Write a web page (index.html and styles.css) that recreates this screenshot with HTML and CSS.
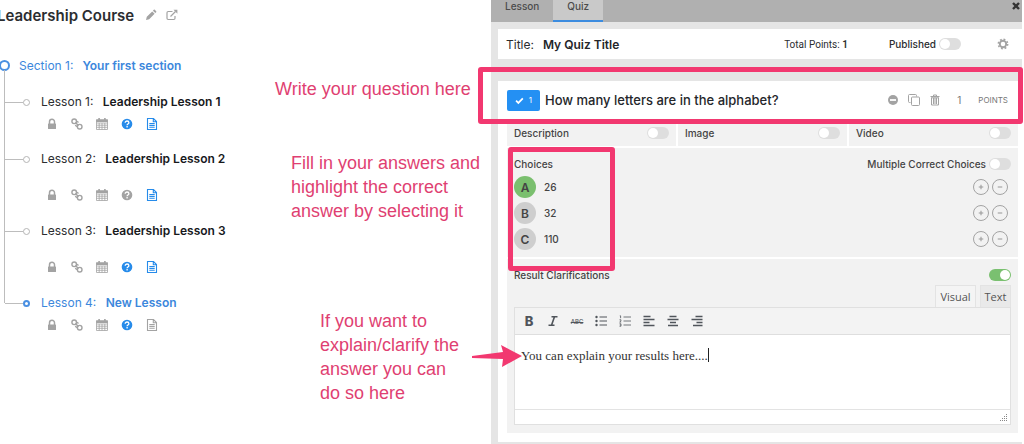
FILE: index.html
```html
<!DOCTYPE html>
<html lang="en">
<head>
<meta charset="utf-8">
<title>Leadership Course</title>
<link rel="stylesheet" href="styles.css">
</head>
<body>
<svg class="sprite" aria-hidden="true">
  <symbol id="pencil" viewBox="0 0 12 12"><path d="M1 11l.8-3.2L7.2 2.4l2.4 2.4-5.400 5.400zM7.900 1.700l.9-.9q.5-.4 1 0l1.400 1.400q.4.5 0 1l-.9.9z"/></symbol>
  <symbol id="external" viewBox="0 0 12 12"><path d="M6.500 2.500H2.200Q1 2.500 1 3.700v5.600q0 1.200 1.200 1.200h5.600Q9 10.500 9 9.300V7M4.500 7.500l5-5" fill="none" stroke="currentColor" stroke-width="1.200"/><path d="M7.500.8H11.400V4.700z"/></symbol>
  <symbol id="lock" viewBox="0 0 16 16"><path d="M5.500 8V5.800a2.500 2.500 0 0 1 5 0V8" fill="none" stroke="currentColor" stroke-width="1.500"/><rect x="4" y="7.500" width="8" height="5.500" rx=".6"/></symbol>
  <symbol id="link" viewBox="0 0 16 16"><g fill="none" stroke="currentColor" stroke-width="1.400"><circle cx="5.200" cy="5.300" r="2.300"/><circle cx="10.700" cy="10.700" r="2.300"/><path d="M6.500 6.600l2.900 2.800M8 5.200l1.500 1.300M6.300 9l1.600 1.700"/></g></symbol>
  <symbol id="calendar" viewBox="0 0 16 16"><path d="M2.500 3.800h11v9.700h-11zM2.500 7h11M2.500 9.200h11M2.500 11.300h11M5.200 7v6.500M8 7v6.500M10.800 7v6.500" fill="none" stroke="currentColor" stroke-width=".8"/><path d="M2.200 3.500h11.600V6H2.200zM4.300 2h1.600v2.500H4.300zM10.100 2h1.600v2.500h-1.600z"/></symbol>
  <symbol id="help" viewBox="0 0 16 16"><circle cx="8" cy="8" r="5.300"/><path d="M6.200 6.800c0-2.500 3.700-2.300 3.700-.1 0 1.300-1.800 1.300-1.800 2.500M8.100 10v1.400" fill="none" stroke="#fff" stroke-width="1.300"/></symbol>
  <symbol id="doc" viewBox="0 0 16 16"><path d="M3.500 2.500h6l3 3v8h-9zM9.300 2.500v3.300h3.200M5.300 7.500h5.400M5.300 9.400h5.400M5.300 11.300h5.400" fill="none" stroke="currentColor" stroke-width="1.100"/></symbol>
  <symbol id="gear" viewBox="0 0 12 12"><circle cx="6" cy="6" r="3.200" fill="none" stroke="currentColor" stroke-width="1.900"/><circle cx="6" cy="6" r="4.700" fill="none" stroke="currentColor" stroke-width="1.500" stroke-dasharray="1.850 1.840"/></symbol>
  <symbol id="check" viewBox="0 0 10 10"><path d="M1.200 5.200l2.500 2.500 5-5" fill="none" stroke="currentColor" stroke-width="1.900"/></symbol>
  <symbol id="minus" viewBox="0 0 12 12"><circle cx="6" cy="6" r="5"/><path d="M3 6h6" stroke="#fff" stroke-width="1.800"/></symbol>
  <symbol id="copy" viewBox="0 0 12 12"><g fill="none" stroke="currentColor"><path d="M2.500 8.500H1.500q-1 0-1-1v-6q0-1 1-1h6q1 0 1 1v1"/><rect x="3.500" y="3" width="8" height="8.500" rx="1"/></g></symbol>
  <symbol id="trash" viewBox="0 0 12 12"><path d="M4.500 2V1h3v1M1.500 2.500h9" fill="none" stroke="currentColor"/><path d="M2.500 4v7h7V4M4.500 4v6M6 4v6M7.500 4v6M2 3.800h8" fill="none" stroke="currentColor"/></symbol>
  <symbol id="italic" viewBox="0 0 12 12"><path d="M4.500 1.700h6M1.500 10.300h6M7.500 1.700l-3 8.600" fill="none" stroke="currentColor" stroke-width="1.600"/></symbol>
  <symbol id="bullets" viewBox="0 0 12 12"><path d="M4.500 2H12M4.500 6H12M4.500 10H12" stroke="currentColor"/><circle cx="1.500" cy="2" r="1.200"/><circle cx="1.500" cy="6" r="1.200"/><circle cx="1.500" cy="10" r="1.200"/></symbol>
  <symbol id="numbers" viewBox="0 0 12 12"><path d="M4.500 2H12M4.500 6H12M4.500 10H12M.8.8h.8v2.400M.5 4.800h1.500v1l-1.300 1.200h1.500M.5 8.800h1.500v2.400H.5M.9 10h1" fill="none" stroke="currentColor" stroke-width=".8"/></symbol>
  <symbol id="left" viewBox="0 0 12 12"><path d="M.5 1.500h7M.5 4.500h11M.5 7.500h6M.5 10.500h11" stroke="currentColor" stroke-width="1.500"/></symbol>
  <symbol id="center" viewBox="0 0 12 12"><path d="M2.500 1.500h7M.5 4.500h11M3 7.500h6M1 10.500h10" stroke="currentColor" stroke-width="1.500"/></symbol>
  <symbol id="right" viewBox="0 0 12 12"><path d="M4.500 1.500h7M.5 4.500h11M5.500 7.500h6M2 10.500h9.500" stroke="currentColor" stroke-width="1.500"/></symbol>
</svg>

<main class="page">
  <section class="outline">
    <header class="course">
      <h1>Leadership Course</h1>
      <button class="icon-btn" aria-label="Rename"><svg class="i12"><use href="#pencil"/></svg></button>
      <button class="icon-btn" aria-label="Open"><svg class="i12"><use href="#external"/></svg></button>
    </header>
    <div class="section-row"><span class="ring"></span><span>Section 1:</span><b>Your first section</b></div>
    <ul class="lessons">
      <li class="compact">
        <div class="rail"><span class="node"></span></div>
        <div class="lesson"><p>Lesson 1: <b>Leadership Lesson 1</b></p>
          <div class="tools">
            <button class="icon-btn" aria-label="Lock"><svg class="i16"><use href="#lock"/></svg></button><button class="icon-btn" aria-label="Link"><svg class="i16"><use href="#link"/></svg></button><button class="icon-btn" aria-label="Schedule"><svg class="i16"><use href="#calendar"/></svg></button><button class="icon-btn on" aria-label="Quiz"><svg class="i16"><use href="#help"/></svg></button><button class="icon-btn on" aria-label="Content"><svg class="i16"><use href="#doc"/></svg></button>
          </div></div>
      </li>
      <li>
        <div class="rail"><span class="node"></span></div>
        <div class="lesson"><p>Lesson 2: <b>Leadership Lesson 2</b></p>
          <div class="tools">
            <button class="icon-btn" aria-label="Lock"><svg class="i16"><use href="#lock"/></svg></button><button class="icon-btn" aria-label="Link"><svg class="i16"><use href="#link"/></svg></button><button class="icon-btn" aria-label="Schedule"><svg class="i16"><use href="#calendar"/></svg></button><button class="icon-btn" aria-label="Quiz"><svg class="i16"><use href="#help"/></svg></button><button class="icon-btn on" aria-label="Content"><svg class="i16"><use href="#doc"/></svg></button>
          </div></div>
      </li>
      <li>
        <div class="rail"><span class="node"></span></div>
        <div class="lesson"><p>Lesson 3: <b>Leadership Lesson 3</b></p>
          <div class="tools">
            <button class="icon-btn" aria-label="Lock"><svg class="i16"><use href="#lock"/></svg></button><button class="icon-btn" aria-label="Link"><svg class="i16"><use href="#link"/></svg></button><button class="icon-btn" aria-label="Schedule"><svg class="i16"><use href="#calendar"/></svg></button><button class="icon-btn on" aria-label="Quiz"><svg class="i16"><use href="#help"/></svg></button><button class="icon-btn on" aria-label="Content"><svg class="i16"><use href="#doc"/></svg></button>
          </div></div>
      </li>
      <li class="compact current">
        <div class="rail"><span class="node"></span></div>
        <div class="lesson"><p>Lesson 4: <b>New Lesson</b></p>
          <div class="tools">
            <button class="icon-btn" aria-label="Lock"><svg class="i16"><use href="#lock"/></svg></button><button class="icon-btn" aria-label="Link"><svg class="i16"><use href="#link"/></svg></button><button class="icon-btn" aria-label="Schedule"><svg class="i16"><use href="#calendar"/></svg></button><button class="icon-btn on" aria-label="Quiz"><svg class="i16"><use href="#help"/></svg></button><button class="icon-btn" aria-label="Content"><svg class="i16"><use href="#doc"/></svg></button>
          </div></div>
      </li>
    </ul>
  </section>

  <aside class="notes">
    <p>Write your question here</p>
    <p class="note-choices">Fill in your answers and<br>highlight the correct<br>answer by selecting it</p>
    <p class="note-result">If you want to<br>explain/clarify the<br>answer you can<br>do so here</p>
  </aside>

  <section class="panel">
    <nav class="tabs">
      <button class="tab">Lesson</button>
      <button class="tab active">Quiz</button>
      <button class="close" aria-label="Close"><svg viewBox="0 0 8 8"><path d="M1 1l6 6M7 1L1 7" stroke="currentColor" stroke-width="2.400"/></svg></button>
    </nav>

    <div class="title-card">
      <label for="quiz-title">Title:</label>
      <input id="quiz-title" class="text-input" type="text" value="My Quiz Title">
      <span class="total">Total Points: <b>1</b></span>
      <label class="published">Published <input class="switch" type="checkbox"></label>
      <button class="icon-btn" aria-label="Settings"><svg class="i12"><use href="#gear"/></svg></button>
    </div>

    <div class="quiz-card">
      <div class="question">
        <button class="badge"><svg viewBox="0 0 10 10"><use href="#check"/></svg>1</button>
        <input class="text-input" type="text" aria-label="Question" value="How many letters are in the alphabet?">
        <div class="question-tools">
          <button class="icon-btn" aria-label="Remove"><svg class="i12"><use href="#minus"/></svg></button>
          <button class="icon-btn" aria-label="Duplicate"><svg class="i12"><use href="#copy"/></svg></button>
          <button class="icon-btn" aria-label="Delete"><svg class="i12"><use href="#trash"/></svg></button>
        </div>
        <label class="points"><input type="text" value="1">POINTS</label>
        <span class="mark mark-question"></span>
      </div>

      <div class="options">
        <label>Description <input class="switch" type="checkbox"></label>
        <label>Image <input class="switch" type="checkbox"></label>
        <label>Video <input class="switch" type="checkbox"></label>
      </div>

      <div class="choices">
        <div class="bar"><h2>Choices</h2><label class="multiple">Multiple Correct Choices <input class="switch" type="checkbox"></label></div>
        <div class="choice"><button class="letter correct">A</button><input type="text" aria-label="Choice A" value="26"><button class="round" aria-label="Add"><svg viewBox="0 0 8 8"><path d="M1 4h6M4 1v6" stroke="currentColor" stroke-width="1.400"/></svg></button><button class="round" aria-label="Remove"><svg viewBox="0 0 8 8"><path d="M1 4h6" stroke="currentColor" stroke-width="1.400"/></svg></button></div>
        <div class="choice"><button class="letter">B</button><input type="text" aria-label="Choice B" value="32"><button class="round" aria-label="Add"><svg viewBox="0 0 8 8"><path d="M1 4h6M4 1v6" stroke="currentColor" stroke-width="1.400"/></svg></button><button class="round" aria-label="Remove"><svg viewBox="0 0 8 8"><path d="M1 4h6" stroke="currentColor" stroke-width="1.400"/></svg></button></div>
        <div class="choice"><button class="letter">C</button><input type="text" aria-label="Choice C" value="110"><button class="round" aria-label="Add"><svg viewBox="0 0 8 8"><path d="M1 4h6M4 1v6" stroke="currentColor" stroke-width="1.400"/></svg></button><button class="round" aria-label="Remove"><svg viewBox="0 0 8 8"><path d="M1 4h6" stroke="currentColor" stroke-width="1.400"/></svg></button></div>
        <span class="mark mark-choices"></span>
      </div>

      <div class="result">
        <label class="bar">Result Clarifications <input class="switch" type="checkbox" checked></label>
        <div class="modes"><button class="mode active">Visual</button><button class="mode">Text</button></div>
        <div class="editor">
          <div class="toolbar">
            <button class="bold">B</button>
            <button aria-label="Italic"><svg class="i12"><use href="#italic"/></svg></button>
            <button class="strike">ABC</button>
            <button aria-label="Bullets"><svg class="i12"><use href="#bullets"/></svg></button>
            <button aria-label="Numbers"><svg class="i12"><use href="#numbers"/></svg></button>
            <button aria-label="Align left"><svg class="i12"><use href="#left"/></svg></button>
            <button aria-label="Align center"><svg class="i12"><use href="#center"/></svg></button>
            <button aria-label="Align right"><svg class="i12"><use href="#right"/></svg></button>
          </div>
          <div class="body">
            <textarea aria-label="Clarification" rows="1">You can explain your results here....</textarea><span class="caret"></span>
            <svg class="arrow" viewBox="0 0 52 24"><path d="M1 12L32 8l-2-7 21 11-20 11 1-8L1 14z"/></svg>
          </div>
          <div class="status"><svg viewBox="0 0 8 8"><path d="M6 0h1v1H6zM4 2h1v1H4zM6 2h1v1H6zM2 4h1v1H2zM4 4h1v1H4zM6 4h1v1H6zM0 6h1v1H0zM2 6h1v1H2zM4 6h1v1H4zM6 6h1v1H6z"/></svg></div>
        </div>
      </div>
    </div>
  </section>
</main>
</body>
</html>
```
FILE: styles.css
```css
*, *::before, *::after { box-sizing: border-box; }
body {
  margin: 0;
  overflow: hidden;
  background: #fff;
  color: #2b2d30;
  font-family: Inter, "Liberation Sans", sans-serif;
  font-size: 12px;
}
h1, h2, p, ul { margin: 0; padding: 0; }
ul { list-style: none; }
b { font-weight: 600; }
button, input, textarea { margin: 0; padding: 0; border: 0; background: none; color: inherit; font: inherit; }
input, textarea { min-width: 0; outline: 0; }
svg { display: block; fill: currentColor; }
.sprite { position: absolute; width: 0; height: 0; }
.i12 { width: 12px; height: 12px; }
.i16 { width: 16px; height: 16px; }
.icon-btn { color: #a3a3a3; }
.icon-btn.on { color: #268bea; }

.page {
  display: grid;
  grid-template-columns: 265px minmax(0, 226fr) minmax(0, 533fr);
  min-height: 100vh;
}

/* course outline */
.course { display: flex; align-items: center; height: 30px; margin-left: -3px; }
.course h1 { margin-right: 11px; font-size: 15px; font-weight: 600; white-space: nowrap; }
.course .icon-btn { margin-right: 9px; }
.section-row { display: flex; align-items: center; gap: 9px; height: 20px; margin-top: 25px; color: #3c87dc; }
.ring { width: 11px; height: 11px; margin-left: -1px; border: 2px solid #4a90e2; border-radius: 50%; }
.lessons { margin: -5px 0 0 4px; padding-top: 22px; }
.lessons li { display: flex; height: 72px; }
.lessons .compact { height: 57px; }
.rail { width: 37px; border-left: 1px solid #bdbdbd; }
.lessons li:first-child .rail { margin-top: -22px; padding-top: 22px; }
.current .rail { height: 10px; }
.node { display: flex; align-items: center; height: 20px; }
.node::before { content: ""; width: 18px; height: 1px; background: #bdbdbd; }
.node::after { content: ""; width: 7px; height: 7px; border: 1px solid #b5b5b5; border-radius: 50%; background: #fff; }
.current .node::after { border: 2px solid #4a90e2; }
.lesson p { line-height: 20px; white-space: nowrap; }
.lesson b { margin-left: 6px; color: #17191c; }
.current p, .current b { color: #3c87dc; }
.tools { display: flex; gap: 9px; margin: 18px 0 0 3px; }
.compact .tools { margin-top: 4px; }

/* guidance beside the panel */
.notes { padding: 77px 0 0 10px; color: #df3f72; font: 18px/24px "Liberation Sans", Arial, sans-serif; white-space: nowrap; }
.note-choices { margin: 50px 0 0 16px; }
.note-result { margin: 86px 0 0 45px; }
.mark { position: absolute; border: 5px solid #f23870; border-radius: 3px; pointer-events: none; }

/* quiz panel */
.panel { display: flex; flex-direction: column; margin-right: 2px; background: #e5e5e5; }
.tabs { display: flex; height: 22px; background: #b0b0b0; color: #4b4b4b; }
.tab { padding: 0 14px 8px; font-size: 10px; font-weight: 500; line-height: 12px; border-bottom: 2px solid transparent; }
.tab.active { background: #c9c9c9; border-color: #3c8cdf; }
.close { width: 8px; height: 12px; margin: 0 2px 0 auto; color: #333; }
.title-card { display: flex; align-items: center; height: 30px; margin: 7px 0 22px 7px; padding: 0 13px 0 8px; background: #fff; }
.text-input { flex: 1; margin-left: 9px; color: #24262a; font-weight: 600; }
.total { font-family: Roboto, sans-serif; font-size: 10px; }
.published { display: flex; align-items: center; gap: 3px; margin: 0 36px 0 41px; font-size: 10px; font-weight: 500; }
.quiz-card { flex: 1; margin: 0 0 2px 7px; padding: 0 4px 9px 9px; background: #fff; }
.question { position: relative; display: flex; align-items: center; height: 38px; padding-right: 10px; }
.badge { display: flex; align-items: center; justify-content: center; gap: 5px; width: 33px; height: 21px; border-radius: 2px; background: #2490f3; color: #fff; font-size: 8px; }
.badge svg { width: 9px; height: 9px; }
.question .text-input { margin-left: 5px; font-size: 13px; font-weight: 500; }
.question-tools { display: flex; gap: 9px; }
.points { display: flex; align-items: center; margin-left: 16px; color: #777; font-size: 8px; }
.points input { width: 21px; font-size: 10px; }
.mark-question { top: -14px; right: -5px; bottom: -5px; left: -29px; }

.switch { appearance: none; display: flex; flex: none; width: 22px; height: 12px; padding: 1px; border-radius: 6px; background: #dedede; }
.switch::before { content: ""; width: 10px; height: 10px; border-radius: 50%; background: #fff; }
.switch:checked { justify-content: flex-end; background: #7ac070; }

.options { display: grid; grid-template-columns: repeat(3, 1fr); gap: 2px; color: #444; font-size: 10px; font-weight: 500; }
.options label { display: flex; align-items: center; justify-content: space-between; height: 27px; padding: 0 7px; background: #f2f2f2; }
.choices, .result { margin-top: 2px; padding: 5px 7px; background: #f2f2f2; color: #444; font-size: 10px; font-weight: 500; }
.choices { position: relative; height: 109px; }
.bar { display: flex; align-items: center; justify-content: space-between; height: 21px; }
.bar h2 { font-size: 10px; font-weight: 500; }
.multiple { display: flex; align-items: center; gap: 3px; }
.choice { display: flex; align-items: center; gap: 3px; height: 26px; padding-right: 3px; }
.choice input { flex: 1; margin-left: 5px; }
.letter { width: 22px; height: 22px; border-radius: 50%; background: #cecece; font-size: 12px; font-weight: 600; }
.letter.correct { background: #7abf6e; }
.round { display: grid; place-items: center; width: 16px; height: 16px; border: 1px solid #a3a3a3; border-radius: 50%; color: #999; }
.round svg { width: 6px; height: 6px; }
.mark-choices { top: -1px; left: 1px; width: 107px; height: 124px; }

.result { padding-bottom: 8px; }
.modes { display: flex; justify-content: flex-end; gap: 4px; height: 22px; font: 11px "Open Sans", sans-serif; color: #555; }
.mode { width: 31px; border: 1px solid #e3e3e3; border-bottom: 0; background: #e9e9e9; }
.mode.active { width: 41px; background: #f4f4f4; }
.editor { border: 1px solid #e0e0e0; background: #fff; }
.toolbar { display: flex; align-items: center; gap: 8px; height: 27px; padding-left: 6px; border-bottom: 1px solid #dedede; background: #f3f3f3; color: #50555b; }
.toolbar button { display: grid; place-items: center; width: 16px; height: 16px; }
.toolbar .bold { font-size: 13px; font-weight: 800; }
.toolbar .strike { font-size: 6px; text-decoration: line-through; }
.body { position: relative; display: flex; height: 74px; padding: 13px 6px; color: #333; }
.body textarea { field-sizing: content; height: 16px; resize: none; overflow: hidden; white-space: nowrap; font: 13px/16px "Liberation Serif", serif; }
.caret { width: 1px; height: 14px; background: #222; }
.arrow { position: absolute; top: 9px; left: -44px; width: 52px; height: 24px; color: #f23870; }
.status { display: flex; justify-content: flex-end; align-items: flex-end; height: 15px; padding: 2px; border-top: 1px solid #e3e3e3; color: #888; }
.status svg { width: 8px; height: 8px; }
```
